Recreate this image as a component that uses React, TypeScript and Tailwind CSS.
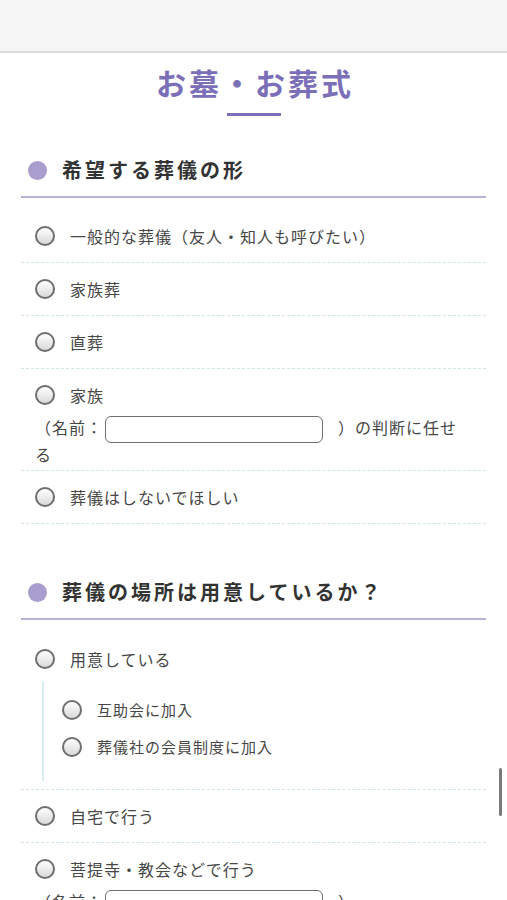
import React from "react";

function Radio() {
  return (
    <span className="inline-block h-[20px] w-[20px] shrink-0 rounded-full border-2 border-[#6e6e6e] bg-gradient-to-b from-white to-[#d9d9d9]" />
  );
}

function NameInput() {
  return (
    <span className="ml-[2px] mr-[15px] inline-block h-[27px] w-[218px] rounded-[6px] border-[1.5px] border-[#6f6f6f] bg-white align-middle" />
  );
}

function Heading({ children }: { children: React.ReactNode }) {
  return (
    <div className="flex items-center border-b-2 border-[#b9b2d8] pb-[11px] pl-[7px]">
      <span className="h-[19px] w-[19px] shrink-0 rounded-full bg-[#a89dcc]" />
      <span className="ml-[15px] text-[20px] font-bold leading-[30px] tracking-[3px] text-[#333]">
        {children}
      </span>
    </div>
  );
}

function Option({ label }: { label: string }) {
  return (
    <div className="flex items-center">
      <Radio />
      <span className="ml-[15px] text-[16px] leading-[24px] tracking-[1px] text-[#474747]">{label}</span>
    </div>
  );
}

function SubOption({ label }: { label: string }) {
  return (
    <div className="flex items-center">
      <Radio />
      <span className="ml-[15px] text-[15px] leading-[24px] tracking-[1px] text-[#474747]">{label}</span>
    </div>
  );
}

const rowBase = "border-b border-dashed border-[#cfe6e6] px-[14px]";

export default function App() {
  return (
    <div
      className="relative min-h-[900px] overflow-hidden bg-white"
      style={{ fontFamily: '"Noto Sans CJK JP", "Noto Sans", sans-serif' }}
    >
      <div className="h-[53px] border-b-2 border-[#dcdcdc] bg-[#f6f6f6]" />

      <div className="flex flex-col items-center pt-[7px]">
        <h1 className="pl-[3px] text-[30px] font-bold leading-[45px] tracking-[3px] text-[#7b70b8]">
          お墓・お葬式
        </h1>
        <div className="mt-[8px] h-[3px] w-[54px] bg-[#7b70b8]" />
      </div>

      <div className="mx-[21px]">
        <section className="mt-[39px]">
          <Heading>希望する葬儀の形</Heading>
          <div className="pt-[12px]">
            <div className={`${rowBase} py-[14px]`}>
              <Option label="一般的な葬儀（友人・知人も呼びたい）" />
            </div>
            <div className={`${rowBase} py-[14px]`}>
              <Option label="家族葬" />
            </div>
            <div className={`${rowBase} py-[14px]`}>
              <Option label="直葬" />
            </div>
            <div className={`${rowBase} pb-[4px] pt-[14px]`}>
              <Option label="家族" />
              <p className="mt-[9px] pr-[10px] text-[16px] leading-[23px] tracking-[1px] text-[#474747]">
                （名前：<NameInput />）の判断に任せる
              </p>
            </div>
            <div className={`${rowBase} py-[14px]`}>
              <Option label="葬儀はしないでほしい" />
            </div>
          </div>
        </section>

        <section className="mt-[53px]">
          <Heading>葬儀の場所は用意しているか？</Heading>
          <div className="pt-[13px]">
            <div className={`${rowBase} pb-[8px] pt-[14px]`}>
              <Option label="用意している" />
              <div className="ml-[7px] mt-[10px] flex flex-col gap-[13px] border-l-2 border-[#d9eef0] pb-[22px] pl-[18px] pt-[17px]">
                <SubOption label="互助会に加入" />
                <SubOption label="葬儀社の会員制度に加入" />
              </div>
            </div>
            <div className={`${rowBase} py-[14px]`}>
              <Option label="自宅で行う" />
            </div>
            <div className={`${rowBase} pb-[4px] pt-[14px]`}>
              <Option label="菩提寺・教会などで行う" />
              <p className="mt-[9px] pr-[10px] text-[16px] leading-[23px] tracking-[1px] text-[#474747]">
                （名前：<NameInput />）
              </p>
            </div>
          </div>
        </section>
      </div>

      <div className="absolute left-[499px] top-[768px] h-[48px] w-[3px] rounded-full bg-[#7a7a7a]" />
    </div>
  );
}
